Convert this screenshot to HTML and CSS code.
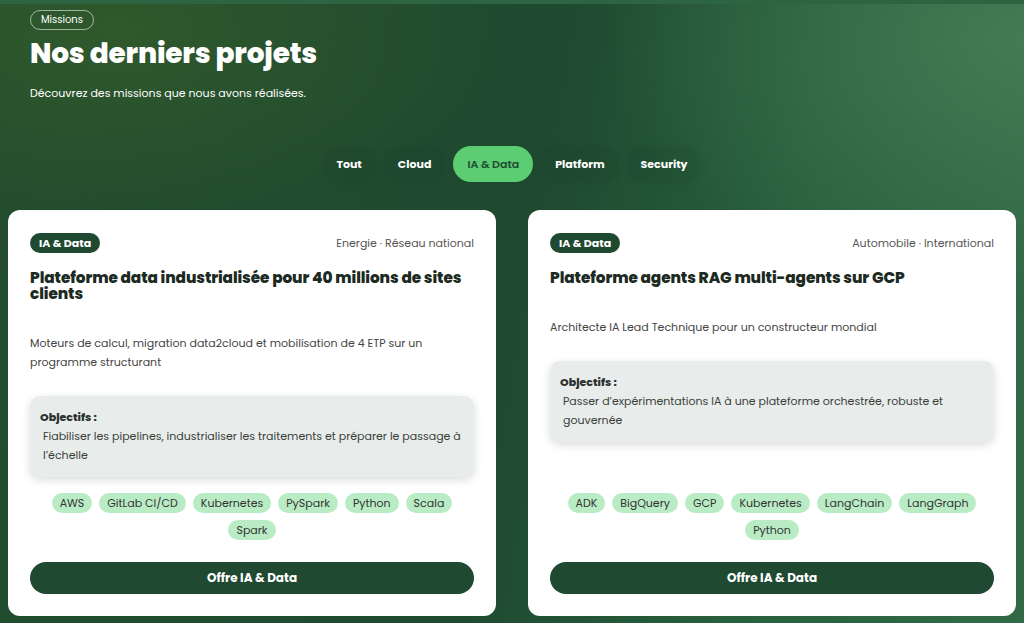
FILE: index.html
```html
<!DOCTYPE html>
<html lang="fr">
<head>
  <meta charset="UTF-8">
  <meta name="viewport" content="width=device-width, initial-scale=1.0">
  <title>Missions</title>
  <link rel="stylesheet" href="styles.css">
</head>
<body>
<section class="missions">
  <header class="missions-head">
    <span class="eyebrow">Missions</span>
    <h1>Nos derniers projets</h1>
    <p class="lead">Découvrez des missions que nous avons réalisées.</p>
  </header>

  <nav class="filters">
    <button class="filter">Tout</button>
    <button class="filter">Cloud</button>
    <button class="filter active">IA &amp; Data</button>
    <button class="filter">Platform</button>
    <button class="filter">Security</button>
  </nav>

  <div class="cards">
    <article class="card">
      <div class="card-top">
        <span class="badge">IA &amp; Data</span>
        <span class="meta">Energie · Réseau national</span>
      </div>
      <h2>Plateforme data industrialisée pour 40 millions de sites clients</h2>
      <p class="desc">Moteurs de calcul, migration data2cloud et mobilisation de 4 ETP sur un programme structurant</p>
      <div class="goals">
        <strong>Objectifs :</strong>
        <p>Fiabiliser les pipelines, industrialiser les traitements et préparer le passage à l’échelle</p>
      </div>
      <ul class="tags">
        <li>AWS</li>
        <li>GitLab CI/CD</li>
        <li>Kubernetes</li>
        <li>PySpark</li>
        <li>Python</li>
        <li>Scala</li>
        <li>Spark</li>
      </ul>
      <a class="cta" href="#">Offre IA &amp; Data</a>
    </article>

    <article class="card">
      <div class="card-top">
        <span class="badge">IA &amp; Data</span>
        <span class="meta">Automobile · International</span>
      </div>
      <h2>Plateforme agents RAG multi-agents sur GCP</h2>
      <p class="desc">Architecte IA Lead Technique pour un constructeur mondial</p>
      <div class="goals">
        <strong>Objectifs :</strong>
        <p>Passer d’expérimentations IA à une plateforme orchestrée, robuste et gouvernée</p>
      </div>
      <ul class="tags">
        <li>ADK</li>
        <li>BigQuery</li>
        <li>GCP</li>
        <li>Kubernetes</li>
        <li>LangChain</li>
        <li>LangGraph</li>
        <li>Python</li>
      </ul>
      <a class="cta" href="#">Offre IA &amp; Data</a>
    </article>
  </div>
</section>
</body>
</html>
```

FILE: styles.css
```css
:root {
  --dark: #1f4a31;
  --mint: #5ccd73;
  --tag: #b9ecc5;
  --ink: #1c2a22;
}
* {
  margin: 0;
  padding: 0;
  box-sizing: border-box;
}
body {
  font-family: "Poppins", "Open Sans", sans-serif;
  color: #fff;
  height: 623px;
  overflow: hidden;
  background:
    radial-gradient(ellipse 420px 260px at 1024px 40px, rgba(84, 140, 98, .55), transparent),
    radial-gradient(ellipse 380px 200px at 120px 30px, rgba(60, 100, 40, .5), transparent),
    linear-gradient(100deg, #234d2e 0%, #1f4a30 50%, #28603e 75%, #336a46 100%);
  border-top: 4px solid #2d6542;
}
.missions {
  padding: 6px 8px 0;
}

/* heading */
.missions-head {
  display: flex;
  flex-direction: column;
  align-items: flex-start;
  padding-left: 22px;
}
.eyebrow {
  font-size: 10px;
  line-height: 18px;
  padding: 0 10px;
  border: 1px solid rgba(255, 255, 255, .55);
  border-radius: 999px;
}
h1 {
  font-size: 28px;
  font-weight: 800;
  letter-spacing: -.2px;
  line-height: 34px;
  margin-top: 7px;
}
.lead {
  font-size: 11px;
  margin-top: 14px;
}

/* filters */
.filters {
  display: flex;
  justify-content: center;
  gap: 8px;
  margin-top: 44px;
}
.filter {
  font-family: inherit;
  font-size: 11px;
  font-weight: 700;
  color: #fff;
  height: 36px;
  padding: 0 14px;
  border: none;
  border-radius: 999px;
  background: rgba(0, 0, 0, .04);
  box-shadow: 0 2px 10px rgba(0, 0, 0, .04);
}
.filter.active {
  background: var(--mint);
  color: var(--dark);
  font-weight: 600;
}

/* cards */
.cards {
  display: grid;
  grid-template-columns: 1fr 1fr;
  gap: 32px;
  margin-top: 28px;
}
.card {
  display: flex;
  flex-direction: column;
  height: 406px;
  background: #fff;
  color: var(--ink);
  border-radius: 12px;
  padding: 23px 22px 22px;
}
.card-top {
  display: flex;
  justify-content: space-between;
  align-items: center;
}
.badge {
  font-size: 11px;
  font-weight: 700;
  line-height: 20px;
  padding: 0 9px;
  color: #fff;
  background: var(--dark);
  border-radius: 999px;
}
.meta {
  font-size: 11px;
  color: #555;
}
.card h2 {
  font-size: 15.3px;
  font-weight: 800;
  line-height: 16px;
  margin-top: 17px;
  letter-spacing: -.1px;
}
.desc {
  font-size: 11px;
  line-height: 19px;
  color: #444;
  margin-top: 32px;
}
.goals {
  margin-top: 24px;
  background: #e8ecea;
  border-radius: 10px;
  padding: 12px 10px 12px;
  box-shadow: 0 3px 10px rgba(0, 0, 0, .14);
  font-size: 11px;
  color: #3a3f3c;
}
.goals strong {
  display: block;
  font-size: 11px;
  line-height: 19px;
  font-weight: 800;
  color: #2b3330;
}
.goals p {
  line-height: 19px;
  padding-left: 3px;
}

.tags {
  list-style: none;
  display: flex;
  flex-wrap: wrap;
  justify-content: center;
  gap: 7px;
  margin-top: auto;
  padding: 0 12px;
}
.tags li {
  font-size: 11px;
  line-height: 20px;
  padding: 0 8px;
  color: #333;
  background: var(--tag);
  border-radius: 999px;
}
.cta {
  display: block;
  margin-top: 22px;
  height: 32px;
  line-height: 32px;
  text-align: center;
  font-size: 12px;
  font-weight: 700;
  color: #fff;
  text-decoration: none;
  background: var(--dark);
  border-radius: 999px;
}
```
